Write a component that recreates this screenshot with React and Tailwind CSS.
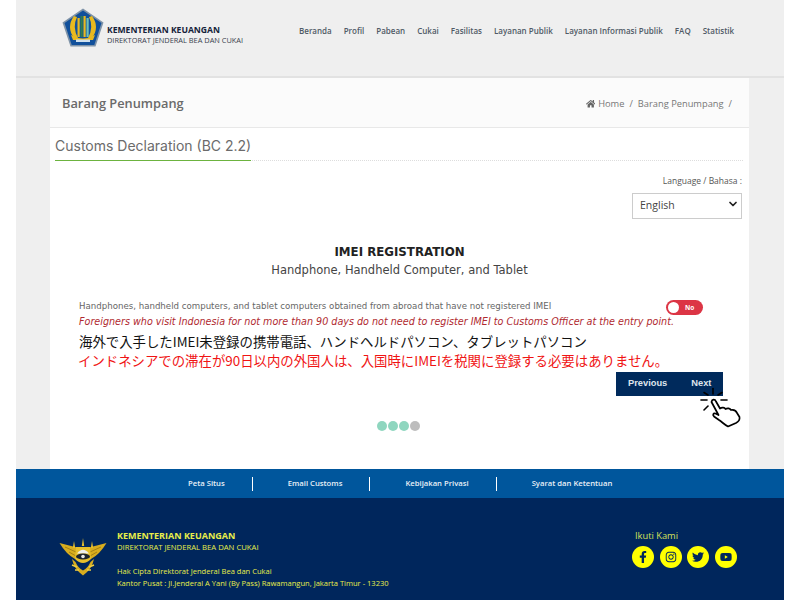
import React from 'react'
import { FaHome, FaFacebookF, FaInstagram, FaTwitter, FaYoutube } from 'react-icons/fa'
import { ChevronDown } from 'lucide-react'

const OPEN = "font-['Open_Sans',sans-serif]"
const VERDANA = "font-['DejaVu_Sans',sans-serif]"
const JP = "font-['Noto_Sans_CJK_JP',sans-serif]"

const navItems = [
  'Beranda', 'Profil', 'Pabean', 'Cukai', 'Fasilitas', 'Layanan Publik',
  'Layanan Informasi Publik', 'FAQ', 'Statistik',
]
const footerLinks = ['Peta Situs', 'Email Customs', 'Kebijakan Privasi', 'Syarat dan Ketentuan']
const socials = [FaFacebookF, FaInstagram, FaTwitter, FaYoutube]

function KemenkeuLogo() {
  return (
    <svg width="42" height="39" viewBox="0 0 42 39" className="shrink-0">
      <path d="M21 0.5 L41.5 14.5 L33.5 38.5 L8.5 38.5 L0.5 14.5 Z" fill="#7f93a8" />
      <path d="M21 2.5 L39.5 15 L32.3 37 L9.7 37 L2.5 15 Z" fill="#11509b" />
      <path d="M12 8 Q4 19 12 30 L16 30 Q10 19 15 9 Z" fill="#e9b91f" />
      <path d="M30 8 Q38 19 30 30 L26 30 Q32 19 27 9 Z" fill="#e9b91f" />
      <rect x="15.5" y="10" width="2.2" height="19" fill="#e9b91f" />
      <rect x="18.5" y="8" width="2.2" height="21" fill="#2f7d4f" />
      <rect x="21.5" y="8" width="2.2" height="21" fill="#e9b91f" />
      <rect x="24.5" y="10" width="2.2" height="19" fill="#6fc0b4" />
      <path d="M9 27 Q21 34 33 27 L31 32 L11 32 Z" fill="#e9b91f" />
      <rect x="14" y="31.5" width="14" height="2.5" fill="#cfe0ee" />
    </svg>
  )
}

function BeaCukaiEmblem() {
  return (
    <svg width="48" height="38" viewBox="0 0 48 38" className="shrink-0">
      {/* wings */}
      <path d="M0.5 5 L18 9.5 L19 17 L16 21 Q7 16 0.5 5 Z" fill="#d8ad1e" />
      <path d="M47.5 5 L30 9.5 L29 17 L32 21 Q41 16 47.5 5 Z" fill="#d8ad1e" />
      <path d="M6 9 L17 14 M10 14 L17 18 M42 9 L31 14 M38 14 L31 18" stroke="#8c6d10" strokeWidth="0.7" />
      {/* spires */}
      <path d="M24 0 L25.2 8 H22.8 Z M15 3 L16.2 10 H13.8 Z M33 3 L34.2 10 H31.8 Z" fill="#e6bf2c" />
      {/* wreath */}
      <path d="M13 21 Q15 31 24 37.5 Q33 31 35 21 L31.5 24 Q29 30 24 32.5 Q19 30 16.5 24 Z" fill="#d8ad1e" />
      <path d="M13 27 L18 29 M16 32 L20 32 M35 27 L30 29 M32 32 L28 32" stroke="#f0ce42" strokeWidth="1.4" />
      {/* shield */}
      <path d="M17 9 H31 L32 21 Q24 29 16 21 Z" fill="#e6bf2c" />
      <path d="M18 15.5 Q24 8 30 15.5 Z" fill="#efefef" />
      <ellipse cx="24" cy="18.5" rx="7" ry="3" fill="#1d2430" />
      <circle cx="24" cy="18.5" r="1.8" fill="#e8e8e8" />
    </svg>
  )
}

function ClickHand() {
  return (
    <svg width="45" height="45" viewBox="0 0 45 45" className="absolute left-[699px] top-[385px]" fill="none" stroke="#000">
      <g strokeWidth="1.6" strokeLinecap="round">
        <path d="M14 3.5 V9" />
        <path d="M5 7.5 L9 10" />
        <path d="M23 7.5 L19 10" />
        <path d="M2 15 H8" />
        <path d="M22 15 H28" />
        <path d="M5 25 L9 21" />
      </g>
      <path
        d="M12.5 17 C13 14 16 14 17 16.5 L21 23.5 C23 22 25.5 22.5 26.5 24 C28.5 22.8 31 23.2 32 25 C34.5 24.5 37 25.5 38 28 L40.5 32 C41 35 39 37 37 38 L29 41.5 C26 40 23 37 20 35 L15 31.5 C13.5 30 14 28 16.5 28.5 L19.5 30 Z"
        fill="#fff"
        strokeWidth="1.7"
        strokeLinejoin="round"
      />
    </svg>
  )
}

export default function App() {
  return (
    <div className="relative h-[600px] overflow-hidden bg-white px-4">
      <div className="flex h-full flex-col bg-[#efefef]">
        <header className="flex h-[78px] shrink-0 items-start border-b-2 border-[#e2e2e2] pl-[46px] pt-2">
          <KemenkeuLogo />
          <div className="ml-[3px] mt-[17px] w-[192px]">
            <p className={`${OPEN} text-[8.6px] font-bold leading-[11px] text-[#15233a]`}>KEMENTERIAN KEUANGAN</p>
            <p className={`${OPEN} text-[7.4px] leading-[9px] text-[#39414e]`}>DIREKTORAT JENDERAL BEA DAN CUKAI</p>
          </div>
          <nav className={`${OPEN} mt-[17px] flex gap-3 text-[8px] font-semibold leading-3 text-[#505a66]`}>
            {navItems.map((item) => (
              <span key={item} className="whitespace-nowrap">{item}</span>
            ))}
          </nav>
        </header>

        <main className="relative ml-[34px] mr-[35px] flex flex-1 flex-col bg-white">
          <div className="flex h-[50px] shrink-0 items-center justify-between border-b border-[#e8e8e8] bg-[#fbfbfb] pl-3 pr-[17px] pt-[3px]">
            <h2 className={`${OPEN} text-[12.8px] font-semibold text-[#6a6a6a]`}>Barang Penumpang</h2>
            <div className={`${OPEN} flex items-center text-[9.3px] text-[#777]`}>
              <FaHome className="mr-[3px] text-[9.5px] text-[#666]" />
              <span>Home</span>
              <span className="mx-[5px]">/</span>
              <span>Barang Penumpang</span>
              <span className="ml-[5px]">/</span>
            </div>
          </div>

          <div className="mx-[5px] mr-[6px] h-[33px] border-b border-dotted border-[#ddd]">
            <h3 className="inline-block h-[33px] border-b border-[#6cb33f] pt-[8px] font-['Inter',sans-serif] text-[14px] leading-[20px] text-[#6b6b6b]">
              Customs Declaration (BC 2.2)
            </h3>
          </div>

          <div className="flex flex-col items-end pr-[7px] pt-[14px]">
            <p className={`${OPEN} text-[8.5px] leading-3 text-[#555]`}>Language / Bahasa :</p>
            <div className="relative mt-[4px] h-[26px] w-[110px]">
              <select className={`${OPEN} h-full w-full appearance-none border border-[#ccc] bg-white pl-[7px] text-[10.5px] text-[#444] outline-none`}>
                <option>English</option>
              </select>
              <ChevronDown size={12} strokeWidth={3.5} className="pointer-events-none absolute right-[3px] top-[7px] text-[#222]" />
            </div>
          </div>

          <div className="pt-[28px] text-center">
            <p className={`${VERDANA} text-[11.8px] font-bold leading-[14px] text-[#222]`}>IMEI REGISTRATION</p>
            <p className={`${VERDANA} mt-[4px] text-[11.5px] leading-[14px] text-[#444]`}>Handphone, Handheld Computer, and Tablet</p>
          </div>

          <div className="pl-[29px] pr-[46px] pt-[23px]">
            <div className="flex items-center justify-between">
              <p className={`${VERDANA} pb-[3px] text-[8.65px] leading-[12px] text-[#666]`}>
                Handphones, handheld computers, and tablet computers obtained from abroad that have not registered IMEI
              </p>
              <div className="flex h-[15px] w-[37px] items-center rounded-full bg-[#dc3545] pl-[2px]">
                <span className="h-[11px] w-[11px] rounded-full bg-white" />
                <span className={`${OPEN} ml-[6px] text-[6.5px] font-bold text-white`}>No</span>
              </div>
            </div>
            <p className={`${VERDANA} mt-px whitespace-nowrap text-[9.6px] italic leading-[12px] text-[#b02a30]`}>
              Foreigners who visit Indonesia for not more than 90 days do not need to register IMEI to Customs Officer at the entry point.
            </p>
            <p className={`${JP} mt-[4px] whitespace-nowrap text-[13.4px] leading-[19px] text-[#111]`}>
              海外で入手したIMEI未登録の携帯電話、ハンドヘルドパソコン、タブレットパソコン
            </p>
            <p className={`${JP} -ml-px whitespace-nowrap text-[13.4px] leading-[19px] text-[#f01414]`}>
              インドネシアでの滞在が90日以内の外国人は、入国時にIMEIを税関に登録する必要はありません。
            </p>
          </div>

          <div className="flex justify-end pr-[26px] pt-[2px]">
            <div className="flex h-6 w-[107px] items-center bg-[#002a5c] pl-3 font-['Liberation_Sans',sans-serif] text-[9.3px] font-bold text-[#dfe5ec]">
              <span>Previous</span>
              <span className="ml-6">Next</span>
            </div>
          </div>

          <div className="flex justify-center gap-px pr-[2px] pt-[25px]">
            <span className="h-[10px] w-[10px] rounded-full bg-[#8fd6bf]" />
            <span className="h-[10px] w-[10px] rounded-full bg-[#8fd6bf]" />
            <span className="h-[10px] w-[10px] rounded-full bg-[#8fd6bf]" />
            <span className="h-[10px] w-[10px] rounded-full bg-[#bdbdbd]" />
          </div>
        </main>

        <div className={`${OPEN} flex h-[29px] shrink-0 items-center bg-[#00569c] pl-[137px] text-[7.7px] font-semibold text-[#e8f0f7]`}>
          {footerLinks.map((link, i) => (
            <span
              key={link}
              className={`flex h-[14px] items-center whitespace-nowrap pl-[35px] pr-[27px] ${i < footerLinks.length - 1 ? 'border-r border-white' : ''}`}
            >
              {link}
            </span>
          ))}
        </div>

        <footer className="flex h-[102px] shrink-0 bg-[#00265c] pl-[43px] pt-[32px]">
          <div className="mt-[8px] self-start">
            <BeaCukaiEmblem />
          </div>
          <div className={`${OPEN} ml-[10px] w-[515px] text-[#e8ee4a]`}>
            <p className="text-[9px] font-bold leading-[11px]">KEMENTERIAN KEUANGAN</p>
            <p className="mt-px text-[7.7px] leading-[11px]">DIREKTORAT JENDERAL BEA DAN CUKAI</p>
            <p className="mt-[13px] text-[7.55px] leading-[11px]">Hak Cipta Direktorat Jenderal Bea dan Cukai</p>
            <p className="mt-px whitespace-nowrap text-[7.55px] leading-[11px]">Kantor Pusat : Jl.Jenderal A Yani (By Pass) Rawamangun, Jakarta Timur - 13230</p>
          </div>
          <div className="flex flex-col">
            <p className={`${OPEN} pl-[3px] text-[9.3px] leading-[12px] text-[#d6e05a]`}>Ikuti Kami</p>
            <div className="mt-[4px] flex gap-[5.6px]">
              {socials.map((Icon, i) => (
                <span key={i} className="flex h-[22px] w-[22px] items-center justify-center rounded-full bg-[#ffff00] text-[12px] text-[#00265c]">
                  <Icon />
                </span>
              ))}
            </div>
          </div>
        </footer>
      </div>
      <ClickHand />
    </div>
  )
}
